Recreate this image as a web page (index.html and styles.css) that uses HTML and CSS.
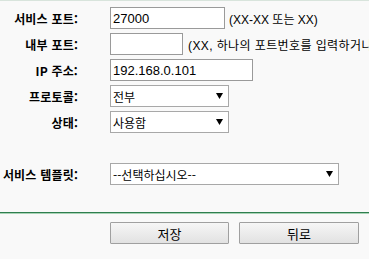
FILE: index.html
```html
<!DOCTYPE html>
<html lang="ko">
<head>
<meta charset="utf-8">
<link rel="stylesheet" href="styles.css">
</head>
<body>
<div class="page">
  <div class="form">
    <div class="lbl">서비스 포트:</div>
    <div class="fld"><input class="txt w-port" value="27000"><span class="hint">(XX-XX 또는 XX)</span></div>

    <div class="lbl">내부 포트:</div>
    <div class="fld"><input class="txt w-inner" value=""><span class="hint hint-wide">(XX, 하나의 포트번호를 입력하거나</span></div>

    <div class="lbl">IP 주소:</div>
    <div class="fld"><input class="txt w-ip" value="192.168.0.101"></div>

    <div class="lbl">프로토콜:</div>
    <div class="fld"><div class="sel w-sel"><span>전부</span><svg class="arrow" width="7" height="6" viewBox="0 0 7 6"><polygon points="0,0 7,0 3.5,6" fill="#000"/></svg></div></div>

    <div class="lbl">상태:</div>
    <div class="fld"><div class="sel w-sel"><span>사용함</span><svg class="arrow" width="7" height="6" viewBox="0 0 7 6"><polygon points="0,0 7,0 3.5,6" fill="#000"/></svg></div></div>

    <div class="lbl"></div>
    <div class="fld"></div>

    <div class="lbl">서비스 템플릿:</div>
    <div class="fld"><div class="sel w-tpl"><span>--선택하십시오--</span><svg class="arrow" width="7" height="6" viewBox="0 0 7 6"><polygon points="0,0 7,0 3.5,6" fill="#000"/></svg></div></div>
  </div>
  <div class="sep"></div>
  <div class="buttons">
    <button class="btn w-save">저장</button>
    <button class="btn w-back">뒤로</button>
  </div>
</div>
</body>
</html>
```

FILE: styles.css
```css
html, body {
  margin: 0;
  padding: 0;
  background: #f9f9f9;
}
body {
  font-family: "Liberation Sans", "Noto Sans CJK KR", sans-serif;
  font-size: 12px;
  color: #000;
  overflow: hidden;
}
.page {
  border-top: 1px solid #d8e4dc;
  padding-top: 4px;
}
.form {
  display: grid;
  grid-template-columns: 78px 1fr;
  column-gap: 32px;
  grid-auto-rows: 26px;
  align-items: center;
}
.lbl {
  font-family: "Noto Sans CJK KR", sans-serif;
  font-weight: bold;
  font-size: 12px;
  letter-spacing: 0.2px;
  text-align: right;
  white-space: nowrap;
  direction: rtl;
  unicode-bidi: plaintext;
}
.fld {
  display: flex;
  align-items: center;
  white-space: nowrap;
}
.txt {
  box-sizing: border-box;
  height: 22px;
  border: 1px solid #9a9a9a;
  background: #fff;
  padding: 0 2px;
  margin: 0;
  font-family: "Liberation Sans", "Noto Sans CJK KR", sans-serif;
  font-size: 13px;
  color: #000;
  outline: none;
}
.w-port { width: 115px; }
.w-inner { width: 73px; }
.w-ip { width: 143px; }
.hint {
  margin-left: 4px;
  font-family: "Liberation Sans", "Noto Sans CJK KR", sans-serif;
  font-size: 12px;
}
.hint-wide {
  margin-left: 5px;
  letter-spacing: 0.4px;
}
.sel {
  box-sizing: border-box;
  height: 22px;
  border: 1px solid #a8a8a8;
  background: #fff;
  display: flex;
  align-items: center;
  justify-content: space-between;
  padding: 0 5px 0 2px;
  font-family: "Noto Sans CJK KR", sans-serif;
  font-size: 12px;
}
.w-sel { width: 119px; }
.w-tpl { width: 229px; }
.arrow { display: block; }
.sep {
  margin-top: 25px;
  height: 1px;
  background: #2f7f4f;
  border-bottom: 1px solid #a9d3b6;
}
.buttons {
  display: flex;
  gap: 10px;
  padding-left: 110px;
  margin-top: 8px;
}
.btn {
  box-sizing: border-box;
  height: 22px;
  border: 1px solid #a0a0a0;
  border-radius: 1px;
  background: linear-gradient(#f6f6f6, #e2e2e2);
  font-family: "Noto Sans CJK KR", sans-serif;
  font-size: 13px;
  color: #000;
  padding: 0;
  margin: 0;
}
.w-save { width: 119px; }
.w-back { width: 120px; }
```
